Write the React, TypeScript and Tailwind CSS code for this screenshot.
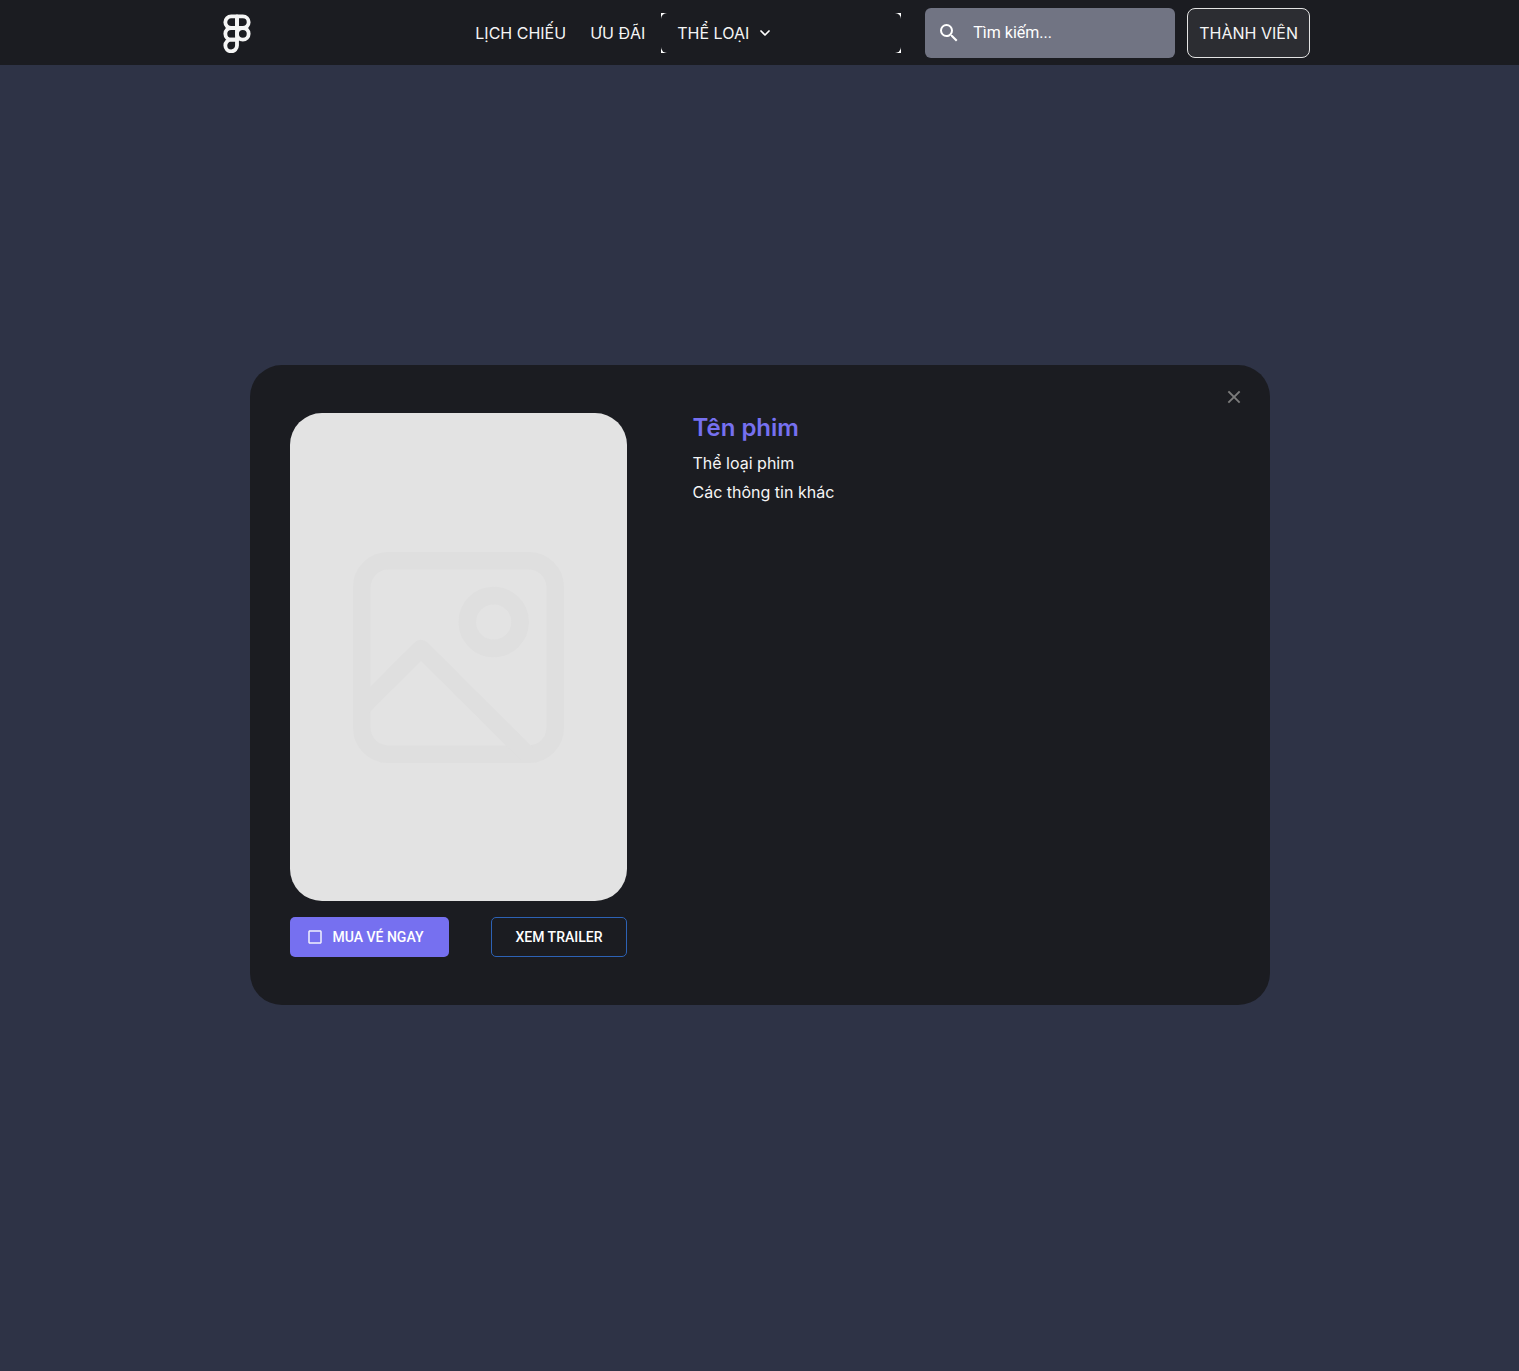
import { ChevronDown, Figma, X } from "lucide-react";
import { MdCheckBoxOutlineBlank, MdSearch } from "react-icons/md";

function Header() {
  return (
    <header className="bg-[#1b1c21] pt-2 pb-[7px]">
      <div className="mx-auto flex max-w-[1101px] items-center justify-between pl-2">
        <a href="#" aria-label="Figma" className="text-[#f5f5f5]">
          <Figma size={40} strokeWidth={2.3} />
        </a>
        <div className="flex items-center">
          <nav className="mr-4 flex items-center gap-6">
            <a href="#lich-chieu">LỊCH CHIẾU</a>
            <a href="#uu-dai">ƯU ĐÃI</a>
          </nav>
          {/* The white backing shows only behind the select's rounded corners. */}
          <div className="relative mr-6 w-60 bg-white">
            <select
              aria-label="Thể loại"
              className="block h-10 w-full appearance-none rounded-md bg-[#1b1c21] pl-4 text-base text-[#f5f5f5]"
            >
              <option>THỂ LOẠI</option>
            </select>
            <ChevronDown
              size={16}
              strokeWidth={2.6}
              className="pointer-events-none absolute top-3 left-24 text-white"
            />
          </div>
          <label className="mr-3 flex h-[50px] w-[250px] items-center gap-3 rounded-md bg-[#717483] pl-3 text-white">
            <MdSearch size={24} className="shrink-0" />
            <input
              type="text"
              aria-label="Tìm kiếm"
              placeholder="Tìm kiếm..."
              className="w-full min-w-0 bg-transparent font-[Roboto,sans-serif] text-base outline-none placeholder:text-white"
            />
          </label>
          <button
            type="button"
            className="h-[50px] rounded-lg border border-[#e3e3e3] bg-[#2c2d32] px-[11px]"
          >
            THÀNH VIÊN
          </button>
        </div>
      </div>
    </header>
  );
}

function PosterPlaceholder() {
  return (
    <div className="flex h-[488px] items-center justify-center rounded-[32px] bg-[#e3e3e3] text-[#dfdfdf]">
      <svg
        width="211"
        height="211"
        viewBox="0 0 211 211"
        fill="none"
        stroke="currentColor"
        strokeWidth="17.6"
        strokeLinejoin="round"
        aria-hidden="true"
      >
        <rect x="8.8" y="8.8" width="193.4" height="193.4" rx="26.4" />
        <circle cx="140.7" cy="70" r="26.4" />
        <path d="M8.8 155.5 68 96.5 174 202" />
      </svg>
    </div>
  );
}

function MovieDialog() {
  return (
    <section
      role="dialog"
      aria-labelledby="movie-title"
      className="relative flex w-full max-w-[1020px] gap-[66px] rounded-[32px] bg-[#1b1c21] px-10 py-12"
    >
      <button
        type="button"
        aria-label="Đóng"
        className="absolute top-[22px] right-[26px] text-[#7c7c7c]"
      >
        <X size={20} strokeWidth={2.2} strokeLinecap="square" />
      </button>
      <div className="flex w-[337px] flex-col gap-4">
        <PosterPlaceholder />
        <div className="flex justify-between font-[Roboto,sans-serif] text-sm font-medium text-white">
          <button
            type="button"
            className="flex h-10 items-center gap-[9px] rounded-[5px] bg-[#7670f0] pr-[26px] pl-4"
          >
            <MdCheckBoxOutlineBlank size={18} className="opacity-90" />
            MUA VÉ NGAY
          </button>
          <button
            type="button"
            className="h-10 rounded-[5px] border border-[#2d62b5] px-[23px]"
          >
            XEM TRAILER
          </button>
        </div>
      </div>
      <div className="flex-1">
        <h1
          id="movie-title"
          className="mb-[7px] text-2xl leading-[29px] font-semibold text-[#7670f0]"
        >
          Tên phim
        </h1>
        <p className="leading-[29px]">Thể loại phim</p>
        <p className="leading-[29px]">Các thông tin khác</p>
      </div>
    </section>
  );
}

export default function App() {
  return (
    <div className="flex min-h-screen flex-col bg-[#2e3346] font-[Inter,sans-serif] text-base text-[#f5f5f5]">
      <Header />
      <main className="flex flex-1 items-center justify-center pb-[66px]">
        <MovieDialog />
      </main>
    </div>
  );
}
